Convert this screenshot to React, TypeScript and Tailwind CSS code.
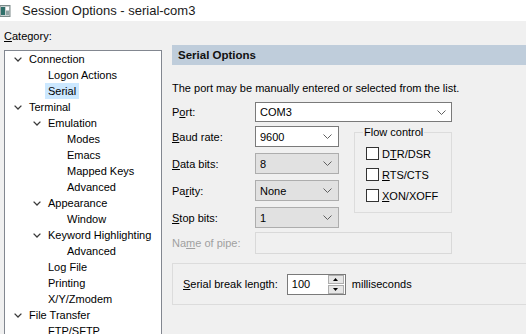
import type { ReactNode } from 'react';

const FONT = { fontFamily: '"Liberation Sans", Arial, sans-serif' };

interface TreeNode {
  label: string;
  level: 0 | 1 | 2;
  expanded?: boolean;
  selected?: boolean;
}

const TREE: TreeNode[] = [
  { label: 'Connection', level: 0, expanded: true },
  { label: 'Logon Actions', level: 1 },
  { label: 'Serial', level: 1, selected: true },
  { label: 'Terminal', level: 0, expanded: true },
  { label: 'Emulation', level: 1, expanded: true },
  { label: 'Modes', level: 2 },
  { label: 'Emacs', level: 2 },
  { label: 'Mapped Keys', level: 2 },
  { label: 'Advanced', level: 2 },
  { label: 'Appearance', level: 1, expanded: true },
  { label: 'Window', level: 2 },
  { label: 'Keyword Highlighting', level: 1, expanded: true },
  { label: 'Advanced', level: 2 },
  { label: 'Log File', level: 1 },
  { label: 'Printing', level: 1 },
  { label: 'X/Y/Zmodem', level: 1 },
  { label: 'File Transfer', level: 0, expanded: true },
  { label: 'FTP/SFTP', level: 1 },
];

const INDENT = ['pl-[9px]', 'pl-[28px]', 'pl-[47px]'];

/** Underlined access-key letter. */
function K({ children }: { children: ReactNode }) {
  return <span className="underline underline-offset-[1px]">{children}</span>;
}

function TreeChevron() {
  return (
    <svg width="8" height="5" viewBox="0 0 8 5" className="block">
      <path d="M0.6 0.6 L4 4 L7.4 0.6" fill="none" stroke="#3a3a3a" strokeWidth="1.3" />
    </svg>
  );
}

function ComboChevron() {
  return (
    <svg width="9" height="5" viewBox="0 0 9 5" className="block">
      <path d="M0.5 0.5 L4.5 4.5 L8.5 0.5" fill="none" stroke="#606060" strokeWidth="1" />
    </svg>
  );
}

function WindowIcon() {
  return (
    <svg width="11" height="12" viewBox="0 0 11 12" className="block">
      <rect x="0" y="0.5" width="10" height="11" fill="#c9d0d0" stroke="#7c8a8a" strokeWidth="1" />
      <rect x="1" y="2" width="4" height="8" fill="#2f6f6a" />
      <rect x="6" y="2" width="3" height="3" fill="#ffffff" />
      <rect x="6" y="6" width="3" height="4" fill="#8fa3a3" />
    </svg>
  );
}

function Combo({ value, editable, width }: { value: string; editable?: boolean; width: string }) {
  return (
    <div
      className={[
        'flex h-[21px] items-center justify-between border pl-[4px] pr-[6px]',
        width,
        editable ? 'border-[#7a7a7a] bg-white' : 'border-[#adadad] bg-[#e1e1e1]',
      ].join(' ')}
    >
      <span>{value}</span>
      <ComboChevron />
    </div>
  );
}

function Row({ label, children }: { label: ReactNode; children: ReactNode }) {
  return (
    <div className="flex h-[21px] items-center">
      <div className="w-[83px]">{label}</div>
      {children}
    </div>
  );
}

function Check({ label }: { label: ReactNode }) {
  return (
    <div className="flex h-[21px] items-center">
      <span className="mr-[3px] h-[13px] w-[13px] border border-[#333333] bg-white" />
      <span>{label}</span>
    </div>
  );
}

export default function App() {
  return (
    <div className="relative h-[334px] w-[526px] overflow-hidden bg-[#f0f0f0] text-[11px] leading-4 text-black" style={FONT}>
      {/* title bar */}
      <div className="flex h-[21px] items-center bg-white">
        <div className="mt-[1px]">
          <WindowIcon />
        </div>
        <span className="ml-[11px] text-[13px] text-[#1a1a1a]">Session Options - serial-com3</span>
      </div>

      <div className="flex">
        {/* category tree */}
        <div className="w-[162px] shrink-0 pl-[4px] pt-[7px]">
          <div className="h-4">
            <K>C</K>ategory:
          </div>
          <div className="mt-[6px] h-[320px] w-[158px] border border-[#828790] bg-white">
            {TREE.map((node, i) => (
              <div key={`${node.label}-${i}`} className={`flex h-4 items-center ${INDENT[node.level]}`}>
                <span className="flex w-[15px] shrink-0 items-center">{node.expanded && <TreeChevron />}</span>
                <span className={node.selected ? 'ml-[-3px] bg-[#cce8ff] px-[3px]' : ''}>{node.label}</span>
              </div>
            ))}
          </div>
        </div>

        {/* serial options page */}
        <div className="ml-[10px] mr-[-20px] min-w-0 flex-1 pt-[24px]">
          <div className="flex h-[20px] items-center bg-[#bfcddb] pl-[6px] text-[11.5px] font-bold text-[#111]">
            Serial Options
          </div>

          <div className="mt-[15px] h-4">The port may be manually entered or selected from the list.</div>

          <div className="mt-[6px] flex h-[20px] items-center">
            <div className="w-[83px]">
              P<K>o</K>rt:
            </div>
            <div className="flex h-[20px] w-[197px] items-center justify-between border border-[#7a7a7a] bg-white pl-[4px] pr-[5px]">
              <span>COM3</span>
              <ComboChevron />
            </div>
          </div>

          <div className="mt-[4px] flex items-start">
            <div className="flex w-[167px] flex-col gap-[6px]">
              <Row label={<><K>B</K>aud rate:</>}>
                <Combo value="9600" editable width="w-[84px]" />
              </Row>
              <Row label={<><K>D</K>ata bits:</>}>
                <Combo value="8" width="w-[84px]" />
              </Row>
              <Row label={<>Pa<K>r</K>ity:</>}>
                <Combo value="None" width="w-[84px]" />
              </Row>
              <Row label={<><K>S</K>top bits:</>}>
                <Combo value="1" width="w-[84px]" />
              </Row>
            </div>

            <fieldset className="ml-[15px] mt-[-2px] h-[89px] w-[98px] border border-[#dcdcdc]">
              <legend className="ml-[8px] px-[1px]">Flow control</legend>
              <div className="pl-[11px] pt-[3px]">
                <Check label={<>D<K>T</K>R/DSR</>} />
                <Check label={<><K>R</K>TS/CTS</>} />
                <Check label={<><K>X</K>ON/XOFF</>} />
              </div>
            </fieldset>
          </div>

          <div className="mt-[4px] flex h-[22px] items-center">
            <div className="w-[83px] text-[#a0a0a0]">
              Na<K>m</K>e of pipe:
            </div>
            <div className="h-[22px] w-[197px] border border-[#d9d9d9] bg-[#f0f0f0]" />
          </div>

          <div className="mt-[9px] flex h-[42px] items-center border border-[#dcdcdc] pl-[10px]">
            <span>
              <K>S</K>erial break length:
            </span>
            <div className="ml-[9px] flex h-[21px] w-[59px] items-center border border-[#7a7a7a] bg-white">
              <span className="flex-1 pl-[4px]">100</span>
              <div className="flex h-[19px] w-[17px] flex-col gap-px pr-px">
                <div className="flex h-[9px] items-center justify-center border border-[#adadad] bg-[#e6e6e6]">
                  <svg width="5" height="3" viewBox="0 0 5 3" className="block">
                    <path d="M0 3 L2.5 0 L5 3 Z" fill="#000" />
                  </svg>
                </div>
                <div className="flex h-[9px] items-center justify-center border border-[#adadad] bg-[#e6e6e6]">
                  <svg width="5" height="3" viewBox="0 0 5 3" className="block">
                    <path d="M0 0 L2.5 3 L5 0 Z" fill="#000" />
                  </svg>
                </div>
              </div>
            </div>
            <span className="ml-[6px]">milliseconds</span>
          </div>
        </div>
      </div>
    </div>
  );
}
